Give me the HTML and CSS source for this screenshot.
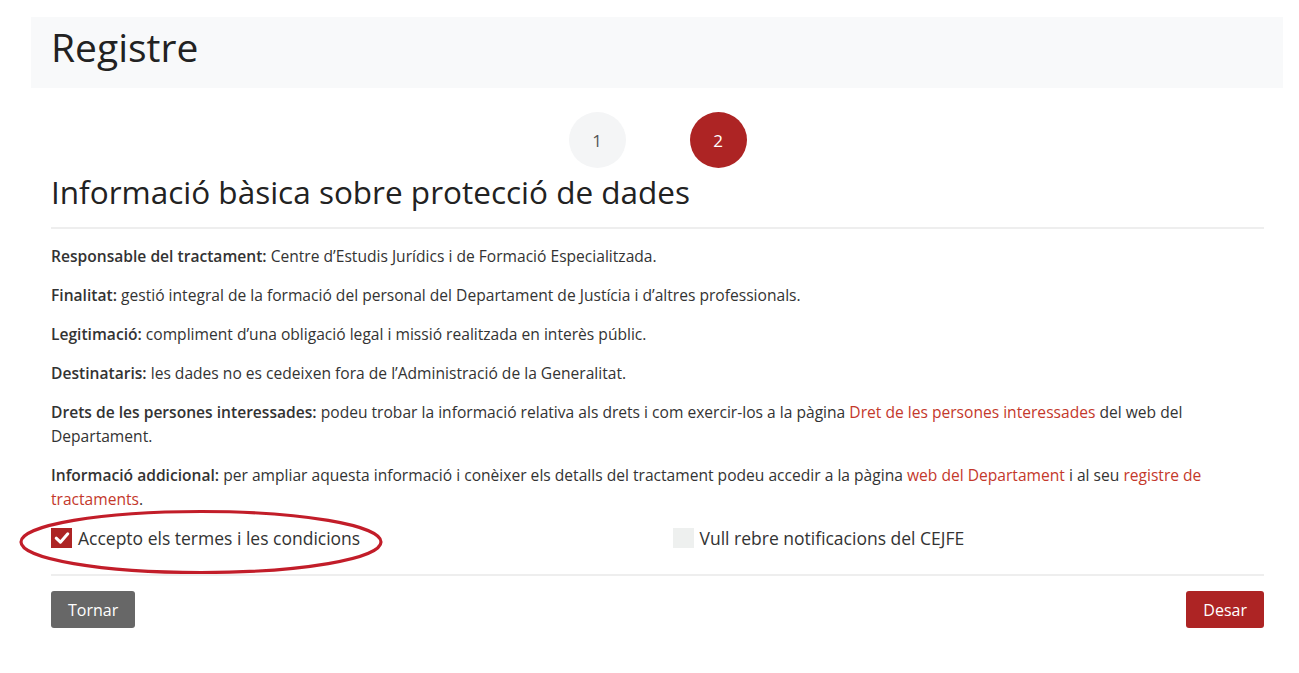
FILE: index.html
```html
<!DOCTYPE html>
<html lang="ca">
<head>
<meta charset="utf-8">
<title>Registre</title>
<link rel="stylesheet" href="styles.css">
</head>
<body>
<div class="page">
  <header class="page-header">
    <h1>Registre</h1>
  </header>
  <main class="content">
    <div class="steps">
      <span class="step">1</span>
      <span class="step active">2</span>
    </div>
    <h2 class="section-title">Informació bàsica sobre protecció de dades</h2>
    <hr class="sep">
    <p><strong>Responsable del tractament:</strong> Centre d’Estudis Jurídics i de Formació Especialitzada.</p>
    <p><strong>Finalitat:</strong> gestió integral de la formació del personal del Departament de Justícia i d’altres professionals.</p>
    <p><strong>Legitimació:</strong> compliment d’una obligació legal i missió realitzada en interès públic.</p>
    <p><strong>Destinataris:</strong> les dades no es cedeixen fora de l’Administració de la Generalitat.</p>
    <p><strong>Drets de les persones interessades:</strong> podeu trobar la informació relativa als drets i com exercir-los a la pàgina <a href="#">Dret de les persones interessades</a> del web del Departament.</p>
    <p><strong>Informació addicional:</strong> per ampliar aquesta informació i conèixer els detalls del tractament podeu accedir a la pàgina <a href="#">web del Departament</a> i al seu <a href="#">registre de tractaments</a>.</p>
    <div class="checks">
      <label class="check">
        <span class="box checked"><svg viewBox="0 0 20 20" width="20" height="20"><path d="M4.2 10.2 L8.4 14.2 L15.8 5.8" fill="none" stroke="#fff" stroke-width="3" stroke-linecap="round" stroke-linejoin="round"/></svg></span>
        <span>Accepto els termes i les condicions</span>
        <svg class="mark" viewBox="0 0 370 68" width="370" height="68"><ellipse cx="183" cy="34" rx="180" ry="30.5" fill="none" stroke="#c21d29" stroke-width="3.2"/></svg>
      </label>
      <label class="check">
        <span class="box"></span>
        <span>Vull rebre notificacions del CEJFE</span>
      </label>
    </div>
    <hr class="sep sep-bottom">
    <div class="actions">
      <button class="btn btn-grey">Tornar</button>
      <button class="btn btn-red">Desar</button>
    </div>
  </main>
</div>
</body>
</html>
```
FILE: styles.css
```css
* { box-sizing: border-box; }
html, body { margin: 0; padding: 0; background: #fff; }
body {
  font-family: "Open Sans", "Liberation Sans", sans-serif;
  color: #333;
}
.page { margin: 17px 16px 0 31px; }
.page-header {
  background: #f8f9fa;
  height: 71px;
  padding: 3px 20px 0;
}
.page-header h1 {
  margin: 0;
  font-weight: 400;
  font-size: 39px;
  color: #222;
  line-height: normal;
}
.content { padding: 0 19px 0 20px; }
.steps {
  display: flex;
  justify-content: center;
  gap: 64px;
  margin-top: 24px;
}
.step {
  width: 57px;
  height: 56px;
  border-radius: 50%;
  background: #f4f5f6;
  color: #555;
  display: flex;
  align-items: center;
  justify-content: center;
  font-size: 17px;
}
.step.active { background: #ad2424; color: #fff; }
.section-title {
  margin: 2px 0 0;
  font-weight: 400;
  font-size: 31.5px;
  color: #222;
  line-height: normal;
}
.sep {
  border: 0;
  border-top: 2px solid #eeeeee;
  margin: 14px 0 15px;
}
p {
  margin: 0 0 15px;
  font-size: 15.6px;
  line-height: 24px;
}
p strong { font-weight: 600; }
a { color: #c4382b; text-decoration: none; }
.checks {
  display: grid;
  grid-template-columns: 1fr 1fr;
  column-gap: 30px;
  margin-top: 14px;
}
.check {
  position: relative;
  display: flex;
  align-items: center;
  gap: 6px;
  font-size: 17.5px;
  height: 24px;
  color: #333;
}
.box {
  width: 21px;
  height: 20px;
  background: #eef0ef;
  display: flex;
  align-items: center;
  justify-content: center;
}
.box.checked { background: #ad2424; }
.mark {
  position: absolute;
  left: -33px;
  top: -18px;
  pointer-events: none;
}
.sep-bottom { margin: 24px 0 15px; }
.actions {
  display: flex;
  justify-content: space-between;
}
.btn {
  font-family: inherit;
  font-size: 16px;
  color: #fff;
  border: 0;
  border-radius: 3px;
  height: 37px;
  padding: 0 17px;
}
.btn-grey { background: #676767; }
.btn-red { background: #ad2424; }
```
